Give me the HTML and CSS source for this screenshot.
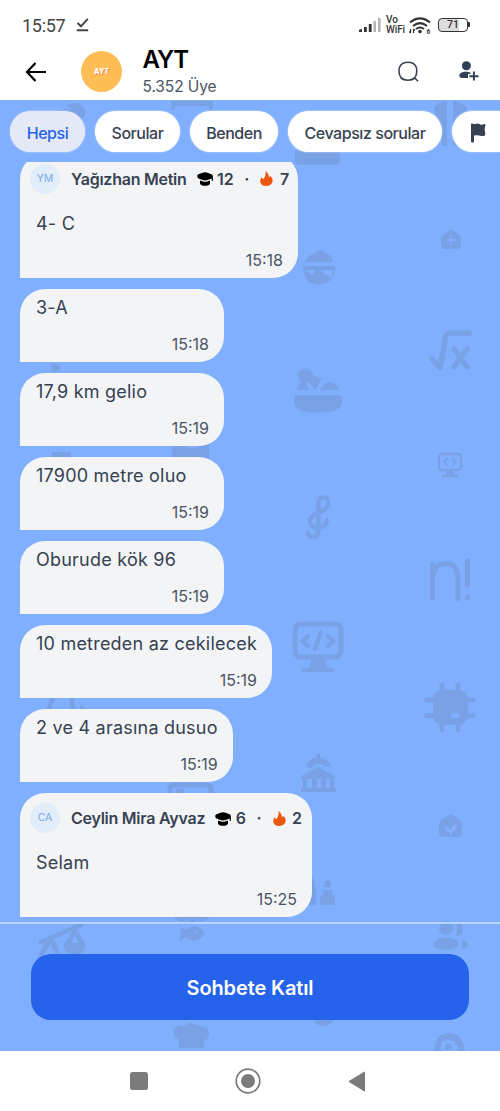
FILE: index.html
```html
<!DOCTYPE html>
<html lang="tr">
<head>
<meta charset="utf-8">
<meta name="viewport" content="width=device-width, initial-scale=1">
<title>AYT</title>
<link rel="stylesheet" href="styles.css">
</head>
<body>
<svg class="defs" width="0" height="0" aria-hidden="true">
  <symbol id="cap" viewBox="0 0 16 14"><path d="M.2 4Q.2 2.800 1.500 2.200L5.500.7Q8 0 10.500.7L14.500 2.200Q16 3 15.900 4.600V8.500Q15.300 9.500 14.700 8.500V6.500L10.500 8Q8 8.800 5.500 8L1.500 6.500Q.2 5.800.2 4Z"/><path d="M3 8.500 6 9.500Q8 10.100 10 9.500L13 8.500V11.500Q12.300 13.800 8 13.800T3 11.500Z"/></symbol>
  <symbol id="fire" viewBox="0 0 13 15"><path d="M5.500 0Q9 2 8.800 6.500 9.900 6 10 4.800 12.700 6.600 12.700 9.800 12 14.900 6.300 15 .5 14.900.2 10 .2 7.700 1.700 6.300 2.100 8 3.400 8 6.400 4.400 5.500 0Z"/></symbol>
</svg>
<div class="screen">
  <div class="status">
    <span class="clock">15:57</span>
    <svg class="done" width="13" height="15" viewBox="0 0 13 15"><path d="M1.500 6 5 9.300 11.800 1.800M.8 13.200H12.200" fill="none" stroke="#444" stroke-width="2"/></svg>
    <svg class="signal" width="22" height="15" viewBox="0 0 22 15"><path d="M0 12.500q0-1.500 3-1.500v3H0zM5 9h2.800v5H5zM9.800 6h2.800v8H9.800z" fill="#333"/><path d="M14.500 3H17v11h-2.500zM19 0h2.600v14H19z" fill="#b5b5b5"/></svg>
    <span class="vowifi">Vo<br>WiFi</span>
    <svg class="wifi" width="22" height="18" viewBox="0 0 22 18"><g fill="none" stroke="#333" stroke-width="2"><path d="M1 5.500Q11-2.800 21 5.500M4 9Q11 3.300 18 9M7 12Q11 9 15 12"/></g><circle cx="11" cy="14.600" r="1.800" fill="#333"/><path d="M1.500 12v4M0 14.500 1.500 16M4.500 16v-4M4.500 12 6 13.300" stroke="#333" stroke-width="1.200" fill="none"/><text x="17.500" y="17" font-size="6.500" font-weight="700" fill="#333">6</text></svg>
    <span class="battery">71</span>
  </div>
  <header class="header">
    <svg class="back" width="22" height="20" viewBox="0 0 22 20"><path d="M10.500 1 2 10l8.500 9M2 10H21" fill="none" stroke="#000" stroke-width="2.200"/></svg>
    <span class="group-avatar">AYT</span>
    <div class="heading"><h1>AYT</h1><p>5.352 Üye</p></div>
    <svg class="search" width="22" height="22" viewBox="0 0 22 22"><path d="M10 1.200C16 1.200 18.800 4 18.800 10S16 19.200 10 19.200 1 16 1 10 4 1.200 10 1.200ZM16.800 17 20 20.300" fill="none" stroke="#374151" stroke-width="1.600"/></svg>
    <svg class="invite" width="20" height="20" viewBox="0 0 20 20"><circle cx="7.400" cy="4.800" r="4.500" fill="#334155"/><path d="M.3 14.700C.3 12.200 3 10.700 7 10.700c2 0 3.300.3 4.400 1v1.400H9v4H3Q.3 16.800.3 14.700Z" fill="#334155"/><path d="M10.300 15.200H19.500M14.900 10.600V19.600" stroke="#334155" stroke-width="2"/></svg>
  </header>
  <main class="chat">
    <svg class="wallpaper" width="500" height="951" viewBox="0 100 500 951">
      <!-- top row -->
      <path d="M50 113Q66 106 76 111V126H50ZM67 105Q80 98 86 112L82 120ZM171 101h42v9h-4v-4h-34v4h-4ZM295 150h45v11q0 4-4 4h-37q-4 0-4-4ZM434 107Q440 100 447 101V146H443ZM453 101Q461 101 467 107L458 146H453Z"/>
      <!-- masked bowl -->
      <path d="M305 262Q307 255 314 254 320 247 326 253 332 255 333 262Z"/>
      <path fill-rule="evenodd" d="M303 266H335Q335 284 318.500 284.500 303 284 303 266ZM307 270Q308 274 313 274L315 270ZM320 270 331 278 333 270Z"/>
      <!-- home plus -->
      <path fill-rule="evenodd" d="M441 239Q441 236 444 234L451 229 458 234Q461 236 461 239V245Q461 249 457 249H445Q441 249 441 245ZM450.200 235V239.200H446V240.800H450.200V245H451.800V240.800H456V239.200H451.800V235Z"/>
      <!-- square root -->
      <path class="line w6" d="M432 359 440 368 446 336Q447 333 451 333H469M454 349 467 367M467 349 454 367"/>
      <!-- planter -->
      <path d="M294 399Q294 395 298 395H338Q342.500 395 342.500 399 342 408 334 411 318 414 302 411 294 408 294 399ZM297 390Q298 385 301 383 295 373 300 370 309 365 314 376 319 378 322 379 318 384 316 389H314L308 381Q305 386 310 390ZM320 390Q324 382 331 382 337 384 339 390Z"/>
      <!-- small monitor -->
      <path class="line w2" d="M442 454H458Q461 454 461 457V467Q461 470 458 470H442Q439 470 439 467V457Q439 454 442 454ZM447 459 444 462 447 465M453 459 456 462 453 465M443 476H457"/><path d="M447 470h6l1 6h-8z"/>
      <!-- treble clef -->
      <path class="line w4" d="M318.500 511V502Q319 497 324 497.500 329 498 328 505 326 511 317 513 310 516 310 522 311 528 319 528 326 527 327 520M318.500 511V532Q317 538 311 537 308 536 308 533"/>
      <!-- n factorial -->
      <path class="line w5" d="M432.500 564V598.500M432.500 577Q434 563.500 446 563.500 458 564 458 579V598.500M467.500 561V585M467.500 597V598"/>
      <!-- large monitor -->
      <path class="line w5" d="M301 624H335Q341 624 341 630V650Q341 657 335 657H301Q295 657 295 650V630Q295 624 301 624Z"/>
      <path class="line w4" d="M308 636 302 641 308 646M328 636 333.500 641 328 646M321 632 315 649M303.500 670H332.500"/><path d="M311 659H325L327 670H309Z"/>
      <!-- chip -->
      <path fill-rule="evenodd" d="M441 690H460Q468 692 468 699V716Q466 724 459 725H441Q433 723 433 716V699Q433 692 441 690ZM453 713Q448 715.500 453 718H458Q462 715.500 458 713Z"/><path class="line w5" d="M442 685V692M458 685V692M442 723V730M458 723V730M427 700H434M427 715.500H434M467 700H473M467 715.500H473"/>
      <!-- parliament -->
      <path fill-rule="evenodd" d="M306 767Q309 758 317 757V754Q318.500 752 320 754V757Q329 759 331 767H325Q319 760 311 768ZM301 776 318.500 767 335 776V779H334V788H336V792H301V788H303V779H301ZM307 779V788H312V779ZM317 779V788H321V779ZM326 779V788H330V779Z"/>
      <!-- home sprout -->
      <path fill-rule="evenodd" d="M439 824Q439 821 442 819L451 814 459 819Q462 821 462 824V833Q462 837 458 837H443Q439 837 439 833ZM444 827Q445 832 449 832L451 835 453 831Q457 830 457 824 452 825 451 830 448 826 444 827Z"/>
      <!-- bottles -->
      <path d="M306 872Q315 876 316 890V905H306ZM324 887Q323 882 328 880 332 880 331 887ZM323 890H332V894Q335 895 335 898V905H320V898Q320 895 323 894Z"/>
      <!-- fragments between bubbles -->
      <path d="M51 363Q61 365 61 368 57 373 52 371ZM52 452H71V461H52ZM80 705l6 3v4h-6z"/><path fill-rule="evenodd" d="M172 441H209V460H172ZM186 446Q191 452 200 446Z"/>
      <path class="line w5" d="M48 712 55 690M71 690 73 715M170 795V789Q170 785 174 785H206Q211 785 211 789V795"/><path d="M176 789h8v6h-8z"/>
      <!-- scales -->
      <path class="line w5" d="M41 942 81 925M51 938 41 955M51 938 58 955M75 931 67 945M75 931 83 945"/>
      <path d="M64 943H85Q87 954 75 955 63 954 64 943Z"/>
      <!-- fish -->
      <path d="M174 917H209Q205 924 198 920 191 924 187 920 179 924 174 917Z"/><path fill-rule="evenodd" d="M180 927 186 930Q197 921 205 933 197 946 186 937L179 941 181 934ZM195 932a1.500 1.500 0 1 0 3 0a1.500 1.500 0 1 0-3 0Z"/>
      <!-- people -->
      <ellipse cx="446" cy="928" rx="7" ry="7"/><path d="M434 945Q434 938 446 937.500 459 938 459 945 458 949 446 950 434 949 434 945ZM454 922Q463 921 463 929 463 936 455 936 460 929 454 922ZM461 940Q468 941 468 945 467 949 460 949 464 945 461 940Z"/>
      <!-- chef hat, gear -->
      <path d="M179 1048V1040Q172 1036 174 1030 177 1024 184 1026 191 1020 198 1026 208 1025 209 1033 209 1039 204 1041V1048ZM313 1019H334Q331 1026 323 1026 315 1025 313 1019Z"/>
      <path fill-rule="evenodd" d="M434 1051Q435 1033 449 1033 463 1033 465 1051ZM447 1039 446 1041 441 1041 442 1046 440 1048 442 1051H456L458 1047 455 1045 455 1041 451 1041ZM445 1047a3.500 3.500 0 1 1 7 0a3.500 3.500 0 1 1-7 0Z"/>
    </svg>
    <nav class="chips">
      <button class="chip active">Hepsi</button><button class="chip">Sorular</button><button class="chip">Benden</button><button class="chip">Cevapsız sorular</button>
      <button class="chip flag"><svg width="15" height="20" viewBox="0 0 15 20"><path d="M0 1Q1-.3 2 1H4Q7 0 9 1.200T13 1Q14.800.7 14.300 3L13.600 6.500 14.300 10.500Q14.500 13 12.500 13 10 13 8 12.500T3 12.500V19Q1.500 20 0 19Z" fill="#374151"/></svg></button>
    </nav>
    <div class="messages">
      <article class="bubble with-author b1">
        <div class="author"><span class="avatar">YM</span><b class="name">Yağızhan Metin</b><svg class="cap"><use href="#cap"/></svg><b class="num">12</b><b class="dot">·</b><svg class="fire"><use href="#fire"/></svg><b class="num">7</b></div>
        <p>4- C</p><time>15:18</time>
      </article>
      <article class="bubble"><p>3-A</p><time>15:18</time></article>
      <article class="bubble"><p>17,9 km gelio</p><time>15:19</time></article>
      <article class="bubble"><p>17900 metre oluo</p><time>15:19</time></article>
      <article class="bubble"><p>Oburude kök 96</p><time>15:19</time></article>
      <article class="bubble"><p>10 metreden az cekilecek</p><time>15:19</time></article>
      <article class="bubble"><p>2 ve 4 arasına dusuo</p><time>15:19</time></article>
      <article class="bubble with-author b2">
        <div class="author"><span class="avatar">CA</span><b class="name">Ceylin Mira Ayvaz</b><svg class="cap"><use href="#cap"/></svg><b class="num">6</b><b class="dot">·</b><svg class="fire"><use href="#fire"/></svg><b class="num">2</b></div>
        <p>Selam</p><time>15:25</time>
      </article>
    </div>
    <footer class="join"><button>Sohbete Katıl</button></footer>
  </main>
  <div class="system-nav">
    <svg width="18" height="18" viewBox="0 0 18 18"><rect width="18" height="18" rx="2.500" fill="#7b7b7b"/></svg>
    <svg width="26" height="26" viewBox="0 0 26 26"><circle cx="13" cy="13" r="11.800" fill="none" stroke="#7b7b7b" stroke-width="1.700"/><circle cx="13" cy="13" r="7" fill="#7b7b7b"/></svg>
    <svg width="18" height="21" viewBox="0 0 18 21"><path d="M16.500 1V20L1 10.500Z" fill="#7b7b7b" stroke="#7b7b7b" stroke-linejoin="round"/></svg>
  </div>
</div>
</body>
</html>
```
FILE: styles.css
```css
* { box-sizing: border-box; }
body { margin: 0; font-family: Inter, sans-serif; color: #374151; }
h1, p { margin: 0; }
svg { display: block; flex: none; }
button { border: 0; font: inherit; color: inherit; }
.defs { height: 0; }
.screen { width: 500px; height: 1111px; display: flex; flex-direction: column; background: #fff; overflow: hidden; }

.status { height: 50px; flex: none; display: flex; align-items: center; padding: 0 31px 0 22px; font-family: Roboto, sans-serif; color: #333; }
.clock { font-size: 18px; width: 54px; letter-spacing: -.3px; color: #444; }
.done { margin-top: -1px; }
.signal { margin-left: 270px; }
.vowifi { width: 22px; margin-left: 5px; font: 500 10px/10px Roboto, sans-serif; letter-spacing: -.1px; white-space: nowrap; }
.wifi { margin: 1px 0 0 1px; }
.battery { position: relative; margin-left: 7px; width: 30px; height: 14px; border: 1.500px solid #333; border-radius: 4px; font: 500 10.500px/12px Roboto, sans-serif; text-align: center; background: linear-gradient(90deg, #ddd 70%, #fff 70%); }
.battery::after { content: ""; position: absolute; left: 29px; top: 3px; width: 2px; height: 5px; background: #333; border-radius: 0 1px 1px 0; }

.header { height: 50px; flex: none; display: flex; align-items: flex-start; padding-left: 25px; }
.back { margin-top: 12px; }
.group-avatar { width: 41px; height: 41px; border-radius: 50%; margin: 1px 0 0 34px; background: #ffbe55; color: #fff; font: 800 7px/42px Inter, sans-serif; text-align: center; text-shadow: 1px 1px #f28b62; }
.heading { width: 255px; margin-left: 20.500px; }
.heading h1 { font-size: 24px; font-weight: 600; line-height: 26px; margin-top: -3px; color: #000; letter-spacing: -1.200px; }
.heading p { font-size: 15.500px; line-height: 20px; margin-top: 4px; color: #4b5563; letter-spacing: -.1px; }
.search { margin: 11px 0 0 0; }
.invite { margin: 11px 0 0 39px; }

.chat { position: relative; isolation: isolate; flex: 1; min-height: 0; display: flex; flex-direction: column; background: #80afff; overflow: hidden; }
.wallpaper { position: absolute; inset: 0; z-index: -1; fill: #79a2e6; }
.line { fill: none; stroke: #79a2e6; stroke-linecap: round; stroke-linejoin: round; }
.w2 { stroke-width: 2.300; }
.w4 { stroke-width: 4.300; }
.w5 { stroke-width: 5; }
.w6 { stroke-width: 5.500; }

.chips { height: 62px; flex: none; display: flex; gap: 10px; padding: 11px 0 10px 10px; }
.chip { flex: none; height: 41px; padding: 2px 0 0; border-radius: 21px; background: #fff; font-size: 16px; font-weight: 500; width: 75px; letter-spacing: -.45px; box-shadow: 0 0 2px #dbe7ff; }
.chip.active { background: #e5e9f7; color: #2563eb; }
.chip:nth-child(2) { width: 85px; }
.chip:nth-child(3) { width: 88px; }
.chip:nth-child(4) { width: 154px; }
.chip.flag { width: 75px; padding-left: 19px; }

.messages { height: 760px; flex: none; overflow: hidden; display: flex; flex-direction: column; justify-content: flex-end; align-items: flex-start; gap: 10.700px; padding: 0 20px 5px; }
.bubble { flex: none; min-width: 204px; height: 73.400px; padding: 7px 15px 0 16px; border-radius: 25px 25px 25px 0; background: #f2f4f6; display: flex; flex-direction: column; }
.bubble p { font-size: 18px; line-height: 24px; letter-spacing: .22px; white-space: nowrap; }
.bubble time { align-self: flex-end; margin-top: 14px; font-size: 16px; line-height: 20px; color: #4b5563; }
.bubble.with-author { height: 124px; padding-top: 10px; }
.b1 { width: 278px; }
.b2 { width: 292px; }
.author { height: 30px; flex: none; display: flex; align-items: center; margin: 0 -10px 18px -6px; font-size: 16px; white-space: nowrap; }
.author b { font-weight: 600; }
.author .name { letter-spacing: -.25px; }
.avatar { width: 30px; height: 30px; margin-right: 11px; border-radius: 50%; background: #e1edf9; color: #7aa9e8; font-size: 10.500px; line-height: 30px; text-align: center; }
.cap { width: 16px; height: 14px; margin: 1px 4.500px 0 10px; fill: #000; }
.dot { margin: 0 10.500px; }
.fire { width: 13px; height: 15px; margin: 0 6.500px 0 .5px; fill: #ed560d; }

.join { flex: 1; border-top: 2px solid #b9d3ff; padding: 30px 31px; }
.join button { display: block; width: 100%; height: 66px; padding-top: 3px; border-radius: 20px; background: #2563eb; color: #fff; font-size: 20px; font-weight: 600; letter-spacing: -.12px; }
.system-nav { height: 60px; flex: none; display: flex; align-items: center; padding-left: 130px; gap: 87px; }
```
